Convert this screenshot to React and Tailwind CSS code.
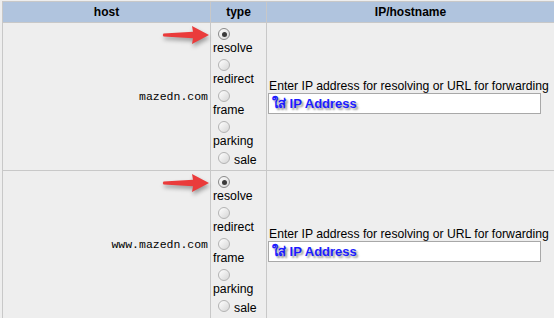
import React from "react";

const types = ["resolve", "redirect", "frame", "parking"];

const Radio = ({ checked }) => (
  <span
    className={`inline-flex items-center justify-center w-[12px] h-[12px] rounded-full border bg-gradient-to-br from-white to-[#d6d6d6] ${
      checked ? "border-[#8a8a8a]" : "border-[#b3b3b3]"
    }`}
  >
    {checked && <span className="w-[5px] h-[5px] rounded-full bg-[#3a3a3a]" />}
  </span>
);

const Arrow = () => (
  <svg
    width="49"
    height="22"
    viewBox="0 0 49 22"
    className="absolute right-0 top-[1px] overflow-visible drop-shadow-[1px_3px_2px_rgba(0,0,0,0.35)]"
  >
    <path
      d="M2.5 9.4 L32 7.8 L31 2 L48 11 L31 20 L32 14.2 L2.5 12.6 Q1 11 2.5 9.4 Z"
      fill="#ea3b3b"
    />
  </svg>
);

const Row = ({ host }) => (
  <>
    <div className="relative flex items-center justify-end pr-[2px] bg-[#eeeeee] h-[147px]">
      <Arrow />
      <span className="font-['Liberation_Mono','Courier_New',monospace] text-[11.5px] text-black">
        {host}
      </span>
    </div>
    <div className="bg-[#eeeeee] pt-[2px] pl-[2px] text-[12.3px] text-black">
      {types.map((t, i) => (
        <div key={t}>
          <div className="h-[16px] pt-[3px] pl-[5px] flex">
            <Radio checked={i === 0} />
          </div>
          <div className="h-[15px] leading-[15px]">{t}</div>
        </div>
      ))}
      <div className="h-[16px] flex items-start">
        <span className="mt-[3px] ml-[5px] flex">
          <Radio />
        </span>
        <span className="ml-[4px] mt-[4px] leading-[15px]">sale</span>
      </div>
    </div>
    <div className="bg-[#eeeeee] flex flex-col justify-center text-[12.2px] text-black">
      <div className="pl-[2px] leading-[14px] whitespace-nowrap">
        Enter IP address for resolving or URL for forwarding
      </div>
      <div className="ml-px w-[273px] h-[21px] border border-[#a8a8a8] bg-white flex items-center pl-[3px]">
        <span className="font-bold text-[13px] text-[#1b1bff] [text-shadow:2px_2px_2px_#9a9a9a]">
          ใส่ IP Address
        </span>
      </div>
    </div>
  </>
);

export default function App() {
  return (
    <div className="w-[554px] h-[318px] overflow-hidden bg-[#eeeeee] font-['Liberation_Sans',Arial,sans-serif]">
      <div className="mt-px ml-[2px] border-t border-l border-[#c8c8c8] bg-[#c8c8c8] grid grid-cols-[207px_55px_1fr] gap-px">
        <div className="h-[20px] bg-[#b0c4de] flex items-center justify-center text-[12px] font-bold">
          host
        </div>
        <div className="h-[20px] bg-[#b0c4de] flex items-center justify-center text-[12px] font-bold">
          type
        </div>
        <div className="h-[20px] bg-[#b0c4de] flex items-center justify-center text-[12px] font-bold">
          IP/hostname
        </div>
        <Row host="mazedn.com" />
        <Row host="www.mazedn.com" />
      </div>
    </div>
  );
}
